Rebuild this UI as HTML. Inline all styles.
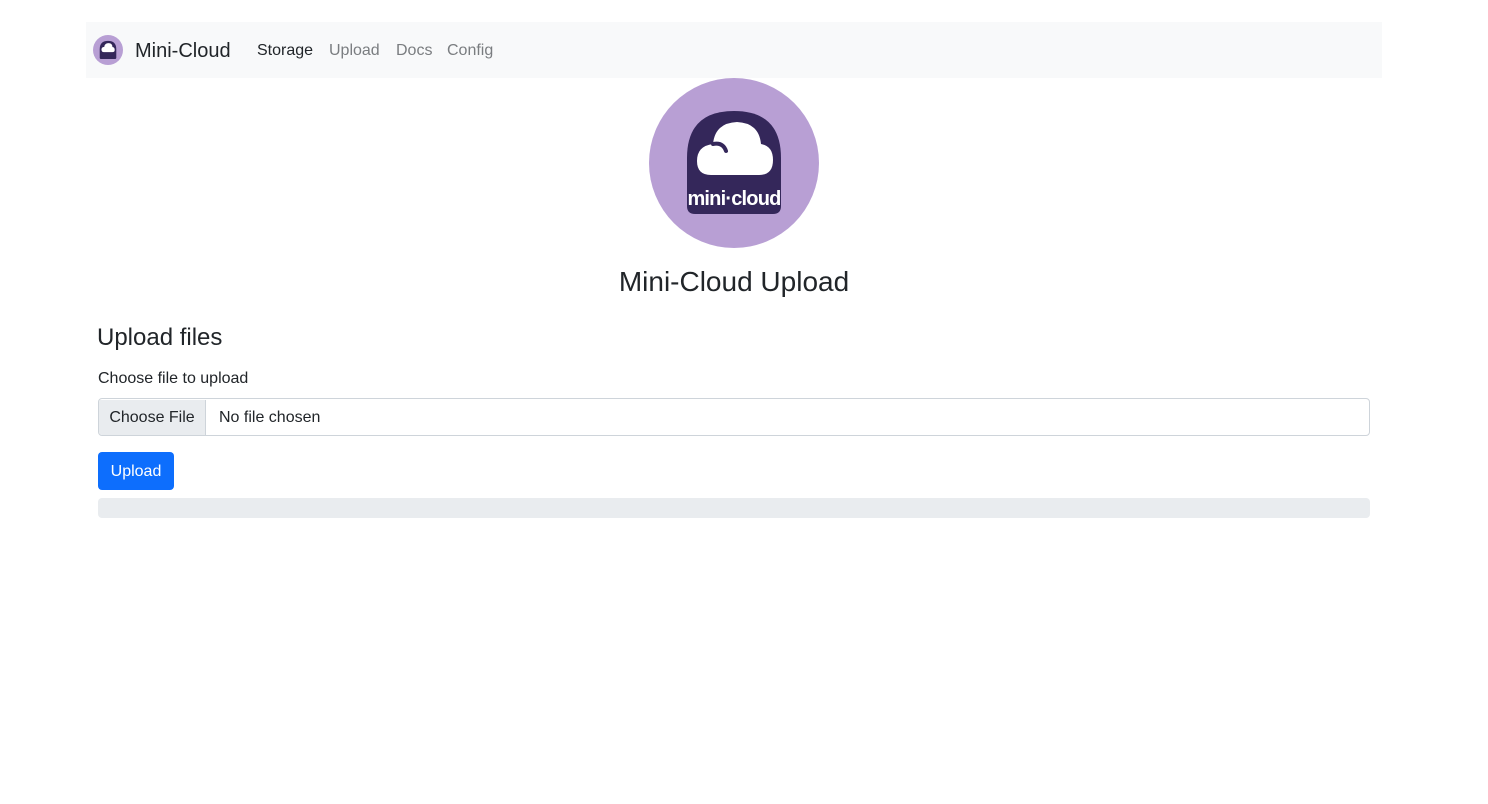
<!DOCTYPE html>
<html><head><meta charset="utf-8"><style>
*{box-sizing:border-box;margin:0;padding:0}
body{width:1488px;height:804px;background:#fff;font-family:"Liberation Sans",sans-serif;color:#212529;position:relative;overflow:hidden}
.nav{position:absolute;left:86px;top:22px;width:1296px;height:56px;background:#f8f9fa}
.abs{position:absolute;white-space:nowrap}
</style></head><body>
<div class="nav">
  <svg class="abs" style="left:7px;top:13px" width="30" height="30" viewBox="0 0 170 170">
    <circle cx="85" cy="85" r="85" fill="#b89fd4"/>
    <path d="M38 80 Q38 33 85 33 Q132 33 132 80 L132 128 Q132 136 124 136 L46 136 Q38 136 38 128 Z" fill="#34275a"/>
    <path d="M62 97 Q48 97 48 83 Q48 68 64 67 Q66 47 88 46 Q110 47 110 68 Q123 70 123 84 Q123 97 110 97 Z" fill="#fff"/>
  </svg>
  <div class="abs" style="left:49px;top:18px;font-size:20px;color:#212529">Mini-Cloud</div>
  <div class="abs" style="left:171px;top:20px;font-size:16px;color:#212529">Storage</div>
  <div class="abs" style="left:243px;top:20px;font-size:16px;color:#7a7d80">Upload</div>
  <div class="abs" style="left:310px;top:20px;font-size:16px;color:#7a7d80">Docs</div>
  <div class="abs" style="left:361px;top:20px;font-size:16px;color:#7a7d80">Config</div>
</div>
<svg class="abs" style="left:649px;top:78px" width="170" height="170" viewBox="0 0 170 170">
  <circle cx="85" cy="85" r="85" fill="#b89fd4"/>
  <path d="M38 80 Q38 33 85 33 Q132 33 132 80 L132 128 Q132 136 124 136 L46 136 Q38 136 38 128 Z" fill="#34275a"/>
  <path d="M62 97 Q48 97 48 83 Q48 68 64 66 Q66 45 88 44 Q110 45 112 66 Q124 68 124 82 Q124 97 110 97 Z" fill="#fff"/>
  <path d="M64 66 Q74 64 77 73" stroke="#34275a" stroke-width="4" fill="none" stroke-linecap="round"/>
  <text x="85" y="127" text-anchor="middle" font-family="Liberation Sans,sans-serif" font-weight="bold" font-size="20" letter-spacing="-0.8" fill="#fff">mini·cloud</text>
</svg>
<div class="abs" style="left:0;width:1468px;text-align:center;top:266px;font-size:28px">Mini-Cloud Upload</div>
<div class="abs" style="left:97px;top:324px;font-size:24px">Upload files</div>
<div class="abs" style="left:98px;top:370px;font-size:16px">Choose file to upload</div>
<div class="abs" style="left:98px;top:398px;width:1272px;height:38px;border:1px solid #ced4da;border-radius:4px;overflow:hidden">
  <div class="abs" style="left:0;top:1px;width:107px;height:36px;background:#e9ecef;border-right:1px solid #ced4da;font-size:16px;line-height:36px;text-align:center">Choose File</div>
  <div class="abs" style="left:120px;top:1px;font-size:16px;line-height:36px">No file chosen</div>
</div>
<div class="abs" style="left:98px;top:452px;width:76px;height:38px;background:#0d6efd;border-radius:4px;color:#fff;font-size:16px;line-height:40px;text-align:center">Upload</div>
<div class="abs" style="left:98px;top:498px;width:1272px;height:20px;background:#e9ecef;border-radius:4px"></div>
</body></html>
